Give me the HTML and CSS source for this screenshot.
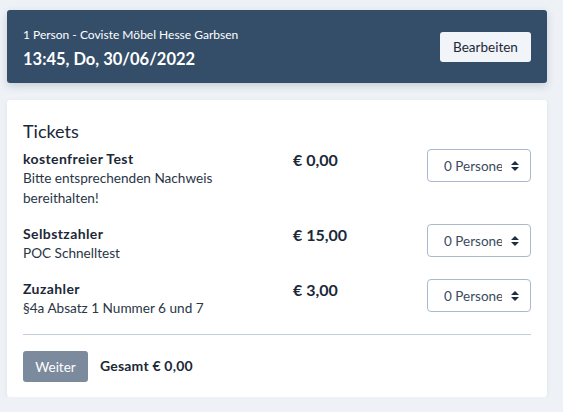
FILE: index.html
```html
<!DOCTYPE html>
<html lang="de">
<head>
<meta charset="utf-8">
<link rel="stylesheet" href="styles.css">
</head>
<body>
<div class="page">
  <header class="summary">
    <div class="summary-text">
      <div class="summary-sub">1 Person - Coviste Möbel Hesse Garbsen</div>
      <div class="summary-main">13:45, Do, 30/06/2022</div>
    </div>
    <button class="btn-light">Bearbeiten</button>
  </header>

  <section class="card">
    <h2 class="card-title">Tickets</h2>

    <div class="ticket">
      <div class="ticket-info">
        <div class="ticket-name">kostenfreier Test</div>
        <div class="ticket-desc">Bitte entsprechenden Nachweis bereithalten!</div>
      </div>
      <div class="ticket-price">€ 0,00</div>
      <div class="select"><span class="select-text">0 Personen</span><svg class="caret" viewBox="0 0 8 10" width="8" height="10"><path d="M4 0 L8 4 H0 Z M4 10 L8 6 H0 Z" fill="#1f2d3d"/></svg></div>
    </div>

    <div class="ticket">
      <div class="ticket-info">
        <div class="ticket-name">Selbstzahler</div>
        <div class="ticket-desc">POC Schnelltest</div>
      </div>
      <div class="ticket-price">€ 15,00</div>
      <div class="select"><span class="select-text">0 Personen</span><svg class="caret" viewBox="0 0 8 10" width="8" height="10"><path d="M4 0 L8 4 H0 Z M4 10 L8 6 H0 Z" fill="#1f2d3d"/></svg></div>
    </div>

    <div class="ticket">
      <div class="ticket-info">
        <div class="ticket-name">Zuzahler</div>
        <div class="ticket-desc">§4a Absatz 1 Nummer 6 und 7</div>
      </div>
      <div class="ticket-price">€ 3,00</div>
      <div class="select"><span class="select-text">0 Personen</span><svg class="caret" viewBox="0 0 8 10" width="8" height="10"><path d="M4 0 L8 4 H0 Z M4 10 L8 6 H0 Z" fill="#1f2d3d"/></svg></div>
    </div>

    <hr class="divider">

    <div class="footer">
      <button class="btn-muted">Weiter</button>
      <div class="total">Gesamt € 0,00</div>
    </div>
  </section>
</div>
</body>
</html>
```

FILE: styles.css
```css
* { box-sizing: border-box; }

html, body {
  margin: 0;
  padding: 0;
  background: #eef2f7;
}

body {
  font-family: Lato, "Open Sans", sans-serif;
  color: #1b2838;
}

.page {
  padding: 10px 16px 0 7px;
  display: flex;
  flex-direction: column;
  gap: 17px;
}

.summary {
  height: 73px;
  background: #344e69;
  border-radius: 3px;
  display: flex;
  align-items: center;
  justify-content: space-between;
  padding: 0 16px;
  box-shadow: 0 3px 8px rgba(30, 45, 60, 0.18);
}

.summary-text {
  padding-top: 3px;
}

.summary-sub {
  color: #ffffff;
  font-size: 12px;
  line-height: 16px;
  margin-bottom: 5px;
}

.summary-main {
  color: #ffffff;
  font-size: 16.5px;
  font-weight: 700;
  line-height: 22px;
}

.btn-light {
  font-family: inherit;
  font-size: 13.5px;
  color: #1b2838;
  background: #f1f4f8;
  border: none;
  border-radius: 3px;
  height: 30px;
  width: 91px;
  padding: 0;
  cursor: pointer;
}

.card {
  background: #ffffff;
  border-radius: 3px;
  padding: 19px 16px 15px;
  box-shadow: 0 1px 4px rgba(30, 45, 60, 0.08);
}

.card-title {
  margin: 0 0 6px;
  font-size: 18px;
  font-weight: 400;
  line-height: 24px;
  color: #1b2838;
}

.ticket {
  display: grid;
  grid-template-columns: 1fr 104px 104px;
  column-gap: 30px;
  align-items: start;
  margin-bottom: 16px;
}

.ticket-name {
  font-size: 14px;
  font-weight: 700;
  line-height: 19px;
  letter-spacing: 0.4px;
}

.ticket-desc {
  font-size: 13.6px;
  line-height: 20px;
  color: #2a3646;
}

.ticket-price {
  font-size: 16px;
  font-weight: 700;
  line-height: 22px;
}

.select {
  height: 33px;
  border: 1px solid #a9b9ca;
  border-radius: 4px;
  display: flex;
  align-items: center;
  padding: 0 11px 0 16px;
  gap: 9px;
  overflow: hidden;
}

.select-text {
  flex: 1;
  font-size: 13.5px;
  color: #3b4a5c;
  white-space: nowrap;
  overflow: hidden;
}

.caret { flex: none; }

.divider {
  border: none;
  border-top: 1px solid #c3cfdc;
  margin: 0 0 16px;
}

.footer {
  display: flex;
  align-items: center;
  gap: 12px;
}

.btn-muted {
  font-family: inherit;
  font-size: 13.5px;
  color: #ffffff;
  background: #7b8b9d;
  border: none;
  border-radius: 3px;
  width: 65px;
  height: 31px;
  padding: 0;
}

.total {
  font-size: 14px;
  font-weight: 700;
  letter-spacing: 0.2px;
  margin-top: -3px;
}
```
